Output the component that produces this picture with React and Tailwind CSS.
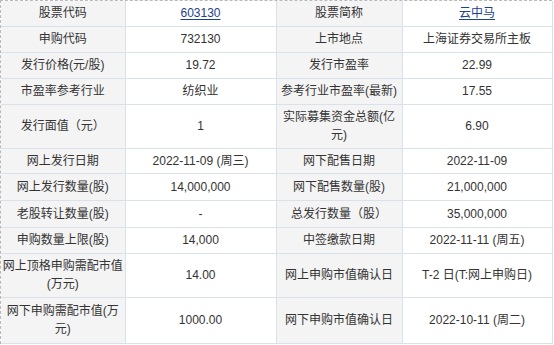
import React from "react";

const rows = [
  { h: "h-[25px]", a: "股票代码", b: "603130", bl: true, c: "股票简称", d: "云中马", dl: true },
  { h: "h-[26px]", a: "申购代码", b: "732130", c: "上市地点", d: "上海证券交易所主板" },
  { h: "h-[26px]", a: "发行价格(元/股)", b: "19.72", c: "发行市盈率", d: "22.99" },
  { h: "h-[26px]", a: "市盈率参考行业", b: "纺织业", c: "参考行业市盈率(最新)", d: "17.55" },
  { h: "h-[44px]", a: "发行面值（元）", b: "1", c: ["实际募集资金总额(亿", "元)"], d: "6.90" },
  { h: "h-[25px]", a: "网上发行日期", b: "2022-11-09 (周三)", c: "网下配售日期", d: "2022-11-09" },
  { h: "h-[27px]", a: "网上发行数量(股)", b: "14,000,000", c: "网下配售数量(股)", d: "21,000,000" },
  { h: "h-[27px]", a: "老股转让数量(股)", b: "-", c: "总发行数量（股）", d: "35,000,000" },
  { h: "h-[26px]", a: "申购数量上限(股)", b: "14,000", c: "中签缴款日期", d: "2022-11-11 (周五)" },
  { h: "h-[44px]", a: ["网上顶格申购需配市值", "(万元)"], b: "14.00", c: "网上申购市值确认日", d: "T-2 日(T:网上申购日)" },
  { h: "h-[46px]", a: ["网下申购需配市值(万", "元)"], b: "1000.00", c: "网下申购市值确认日", d: "2022-10-11 (周二)" },
];

function Txt({ v, link }) {
  if (Array.isArray(v)) {
    return (
      <>
        {v[0]}
        <br />
        {v[1]}
      </>
    );
  }
  if (link) return <span className="text-[#1d3f8c] underline underline-offset-2">{v}</span>;
  return v;
}

export default function App() {
  const base = "border border-[#d7e2ec] text-center align-middle px-0 leading-[18px]";
  const lab = "bg-[#f4f4f4] " + base;
  const val = "bg-white " + base;
  return (
    <div className="w-[552px] bg-white text-[12px] text-[#333] font-['Liberation_Sans','Noto_Sans_CJK_SC',sans-serif] border-t border-l border-dashed border-t-[#b9b9b9] border-l-[#b9b9b9]">
      <table className="w-[551px] table-fixed border-collapse">
        <colgroup>
          <col className="w-[124px]" />
          <col className="w-[151px]" />
          <col className="w-[126px]" />
          <col className="w-[150px]" />
        </colgroup>
        <tbody>
          {rows.map((r, i) => {
            const top = i === 0 ? " border-t-0" : "";
            return (
              <tr key={i} className={r.h}>
                <td className={lab + top + " border-l-0"}><Txt v={r.a} /></td>
                <td className={val + top}><Txt v={r.b} link={r.bl} /></td>
                <td className={lab + top}><Txt v={r.c} /></td>
                <td className={val + top}><Txt v={r.d} link={r.dl} /></td>
              </tr>
            );
          })}
        </tbody>
      </table>
    </div>
  );
}
